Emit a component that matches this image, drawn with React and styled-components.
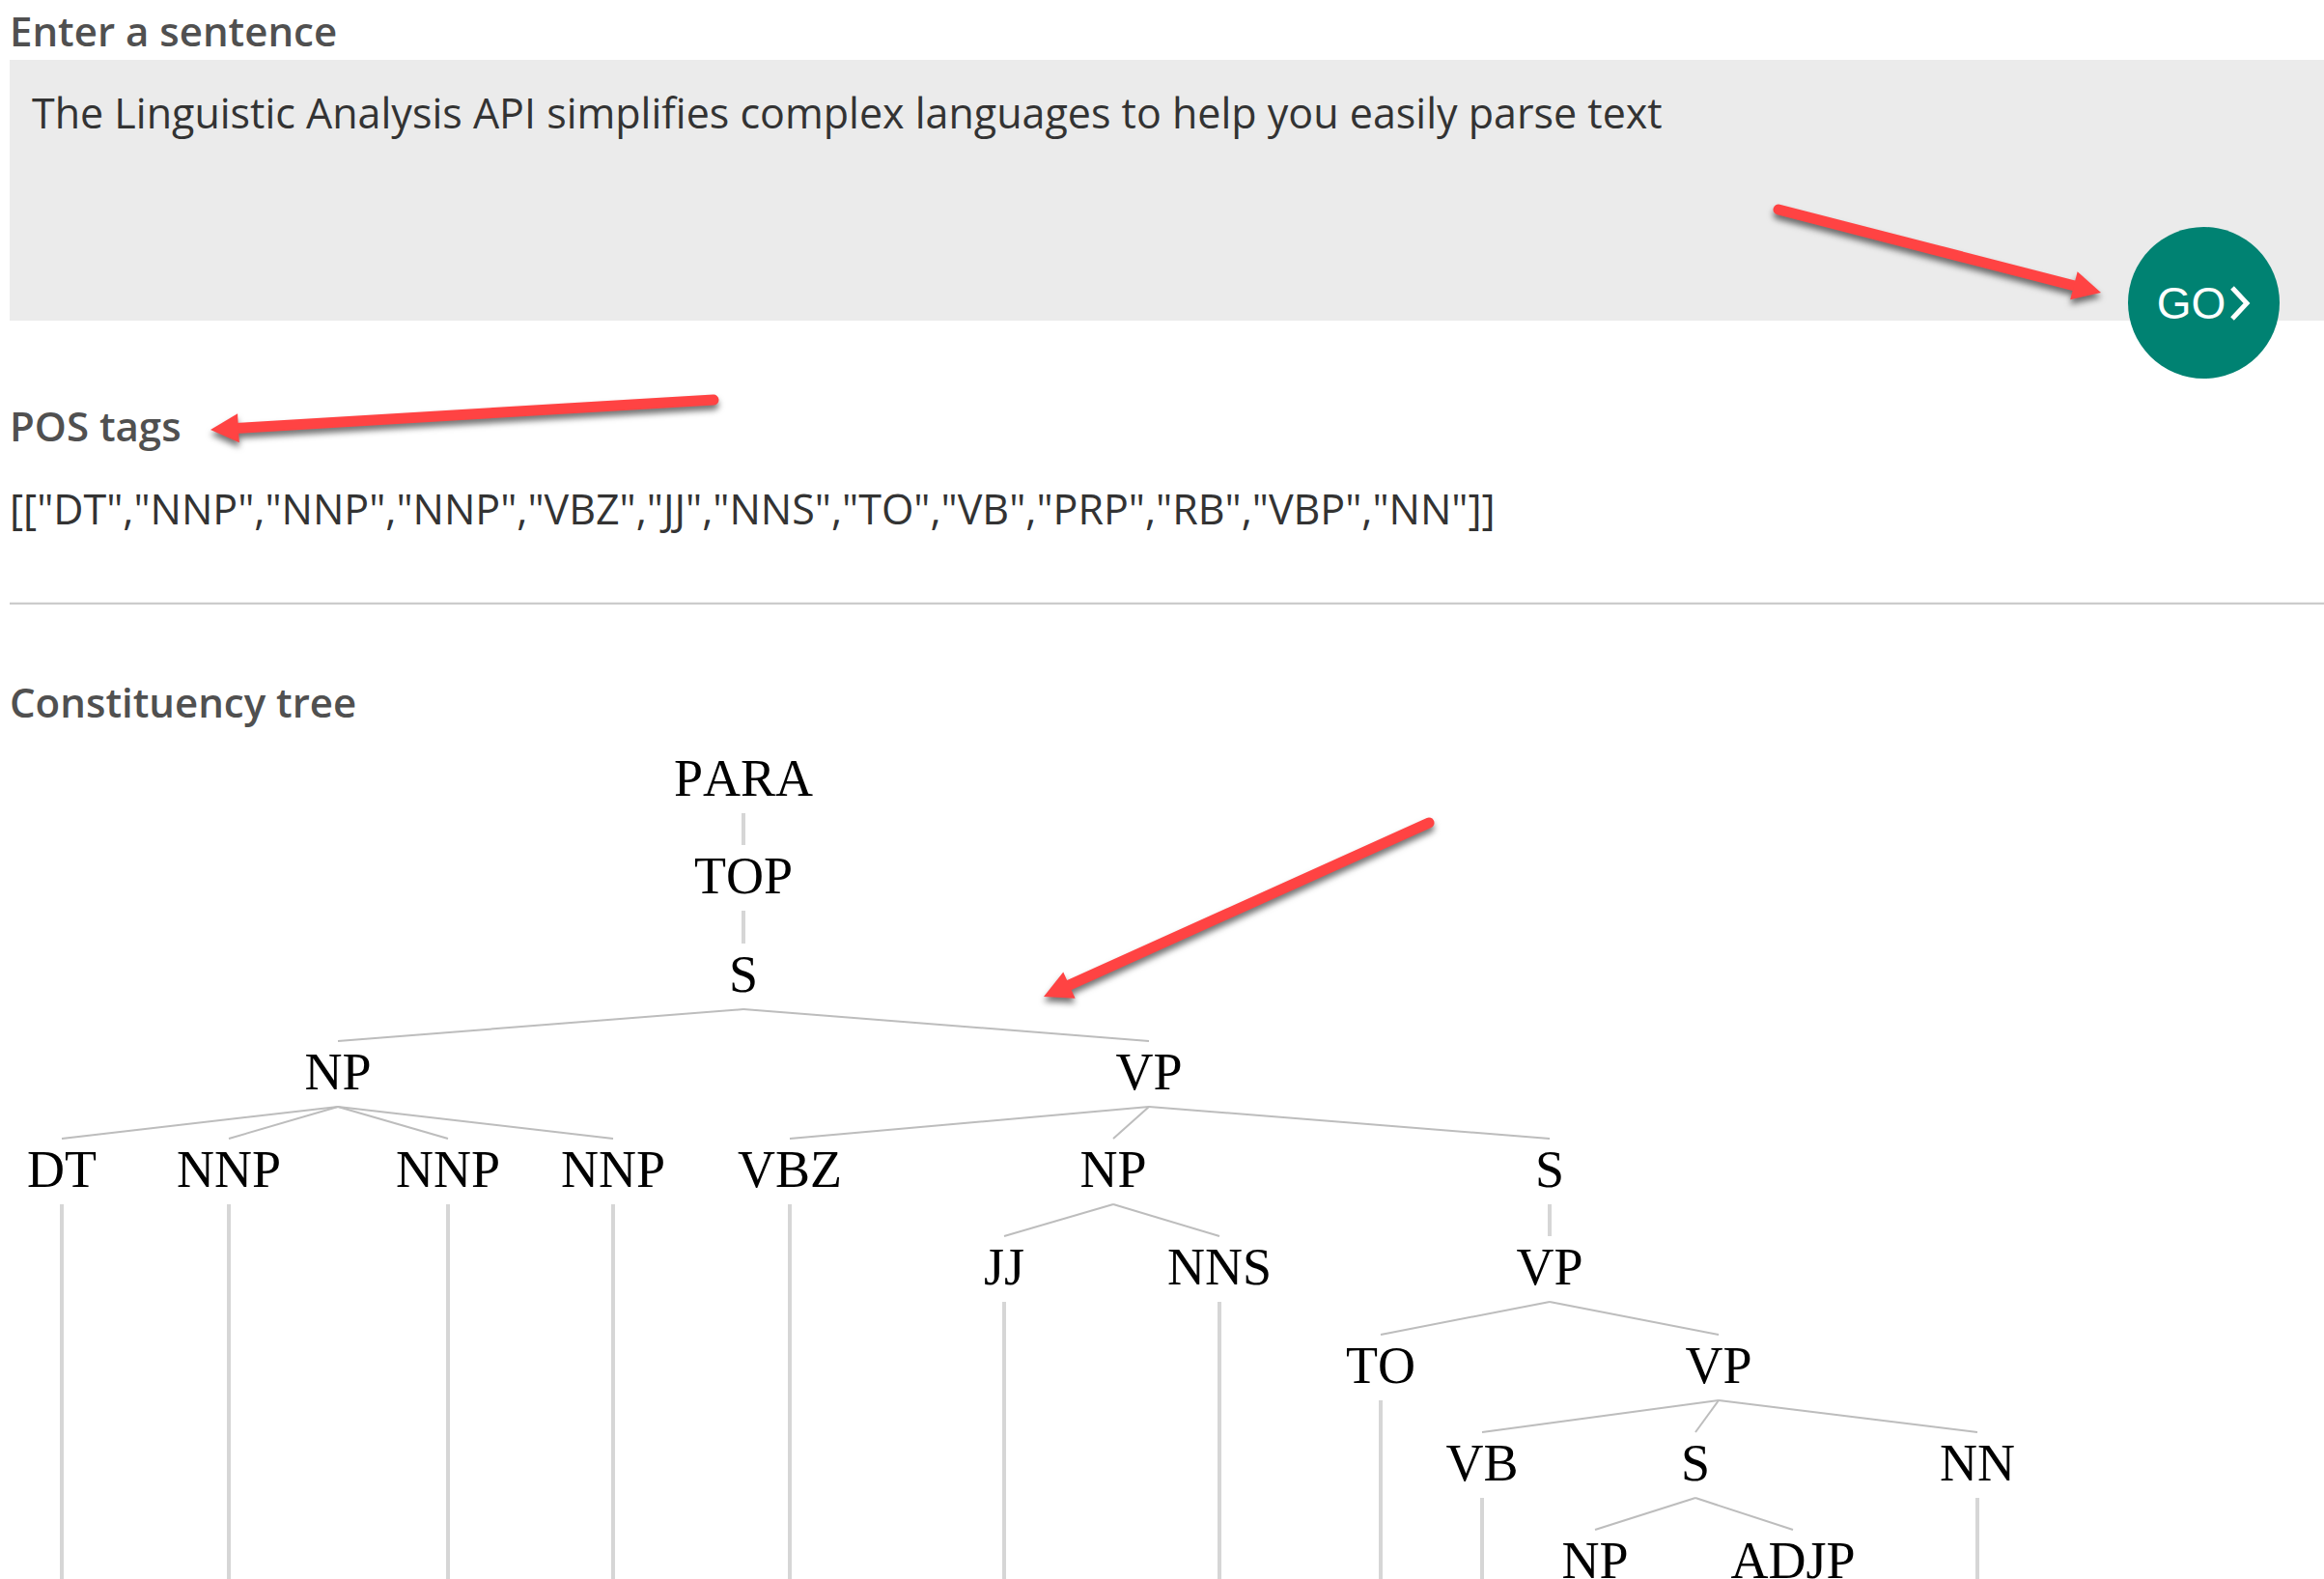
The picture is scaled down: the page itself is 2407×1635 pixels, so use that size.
import React, { useState } from "react";
import styled, { createGlobalStyle } from "styled-components";

const GlobalStyle = createGlobalStyle`
  *, *::before, *::after { box-sizing: border-box; }
  body {
    margin: 0;
    background: #fff;
    font-family: "Open Sans", "Noto Sans", sans-serif;
  }
`;

const Page = styled.main`
  position: relative;
  padding: 2px 0 0 10px;
  overflow: hidden;
`;

const Title = styled.h2`
  margin: 0;
  color: #505050;
  font-size: 42px;
  font-weight: 600;
  line-height: 60px;
`;

const Form = styled.form`
  position: relative;
  margin-bottom: 79px;
`;

const SentenceBox = styled.textarea`
  display: block;
  width: 100%;
  height: 270px;
  padding: 25px 23px;
  border: 0;
  border-radius: 0;
  outline: 0;
  resize: none;
  background: #ebebeb;
  color: #333;
  font-family: inherit;
  font-size: 43px;
  line-height: 60px;
`;

const GoButton = styled.button`
  position: absolute;
  right: 46px;
  bottom: -60px;
  display: flex;
  align-items: center;
  justify-content: center;
  gap: 4px;
  width: 157px;
  height: 157px;
  padding: 0;
  border: 0;
  border-radius: 50%;
  background: #008272;
  color: #fff;
  font-family: "Liberation Sans", Arial, sans-serif;
  font-size: 46px;
  line-height: 60px;
  cursor: pointer;
`;

const Tags = styled.p`
  margin: 26px 0 66px;
  color: #333;
  font-size: 43px;
  line-height: 60px;
`;

const Divider = styled.hr`
  height: 3px;
  margin: 0 0 71px;
  border: 0;
  border-top: 1px solid #f2f2f2;
  background: #ccc;
`;

const TreeCanvas = styled.svg`
  display: block;
  width: 100%;
  height: 878px;
`;

const NodeLabel = styled.text`
  fill: #000;
  font-family: "Liberation Serif", "Times New Roman", serif;
  font-size: 54px;
  font-kerning: none;
  text-anchor: middle;
`;

const Edge = styled.line`
  stroke: ${(p) => (p.$upright ? "#d6d6d6" : "#bdbdbd")};
  stroke-width: ${(p) => (p.$upright ? 4 : 2)}px;
`;

const Annotations = styled.svg`
  position: absolute;
  top: 0;
  left: 0;
  width: 100%;
  height: 100%;
  pointer-events: none;
  filter: drop-shadow(0 5px 3px rgba(0, 0, 0, 0.55));
`;

const Shaft = styled.line`
  stroke: #ff4343;
  stroke-width: 11px;
  stroke-linecap: round;
`;

const Head = styled.polygon`
  fill: #ff4343;
`;

const word = { word: true };

const tree = {
  tag: "PARA", x: 760, kids: [
    { tag: "TOP", x: 760, kids: [
      { tag: "S", x: 760, kids: [
        { tag: "NP", x: 340, kids: [
          { tag: "DT", x: 54, kids: [word] },
          { tag: "NNP", x: 227, kids: [word] },
          { tag: "NNP", x: 454, kids: [word] },
          { tag: "NNP", x: 625, kids: [word] },
        ] },
        { tag: "VP", x: 1180, kids: [
          { tag: "VBZ", x: 808, kids: [word] },
          { tag: "NP", x: 1143, kids: [
            { tag: "JJ", x: 1030, kids: [word] },
            { tag: "NNS", x: 1253, kids: [word] },
          ] },
          { tag: "S", x: 1595, kids: [
            { tag: "VP", x: 1595, kids: [
              { tag: "TO", x: 1420, kids: [word] },
              { tag: "VP", x: 1770, kids: [
                { tag: "VB", x: 1525, kids: [word] },
                { tag: "S", x: 1746, kids: [
                  { tag: "NP", x: 1642, kids: [] },
                  { tag: "ADJP", x: 1847, kids: [] },
                ] },
                { tag: "NN", x: 2038, kids: [word] },
              ] },
            ] },
          ] },
        ] },
      ] },
    ] },
  ],
};

const WORD_ROW_Y = 900;
const baselineOf = (level) => 67 + Math.round((level * 405) / 4);

function TreeNode({ node, level }) {
  const baseline = baselineOf(level);
  return (
    <g>
      <NodeLabel x={node.x} y={baseline}>{node.tag}</NodeLabel>
      {node.kids.map((kid, i) => {
        const x = kid.word ? node.x : kid.x;
        return (
          <React.Fragment key={i}>
            <Edge
              $upright={x === node.x}
              x1={node.x}
              y1={baseline + 18}
              x2={x}
              y2={kid.word ? WORD_ROW_Y : baselineOf(level + 1) - 50}
            />
            {!kid.word && <TreeNode node={kid} level={level + 1} />}
          </React.Fragment>
        );
      })}
    </g>
  );
}

function Arrow({ from, to }) {
  const dx = to[0] - from[0];
  const dy = to[1] - from[1];
  const length = Math.hypot(dx, dy);
  const ux = dx / length;
  const uy = dy / length;
  const bx = to[0] - ux * 29;
  const by = to[1] - uy * 29;
  const points = [
    to,
    [bx - uy * 15, by + ux * 15],
    [bx + uy * 15, by - ux * 15],
  ];
  return (
    <g>
      <Shaft x1={from[0]} y1={from[1]} x2={bx + ux * 3} y2={by + uy * 3} />
      <Head points={points.map((p) => p.join(",")).join(" ")} />
    </g>
  );
}

const tags = [["DT", "NNP", "NNP", "NNP", "VBZ", "JJ", "NNS", "TO", "VB", "PRP", "RB", "VBP", "NN"]];

export default function App() {
  const [sentence, setSentence] = useState(
    "The Linguistic Analysis API simplifies complex languages to help you easily parse text"
  );
  return (
    <>
      <GlobalStyle />
      <Page>
        <Title><label htmlFor="sentence">Enter a sentence</label></Title>
        <Form onSubmit={(e) => e.preventDefault()}>
          <SentenceBox
            id="sentence"
            spellCheck={false}
            value={sentence}
            onChange={(e) => setSentence(e.target.value)}
          />
          <GoButton type="submit">
            GO
            <svg width="22" height="36" viewBox="0 0 22 36" fill="none" aria-hidden="true">
              <path d="M3 2 L18 18 L3 34" stroke="#fff" strokeWidth="5" />
            </svg>
          </GoButton>
        </Form>
        <Title>POS tags</Title>
        <Tags>{JSON.stringify(tags)}</Tags>
        <Divider />
        <Title>Constituency tree</Title>
        <TreeCanvas role="img" aria-label="Constituency tree">
          <TreeNode node={tree} level={0} />
        </TreeCanvas>
        <Annotations aria-hidden="true">
          <Arrow from={[1842, 217]} to={[2176, 303]} />
          <Arrow from={[739, 414]} to={[218, 445]} />
          <Arrow from={[1480, 852]} to={[1081, 1032]} />
        </Annotations>
      </Page>
    </>
  );
}
